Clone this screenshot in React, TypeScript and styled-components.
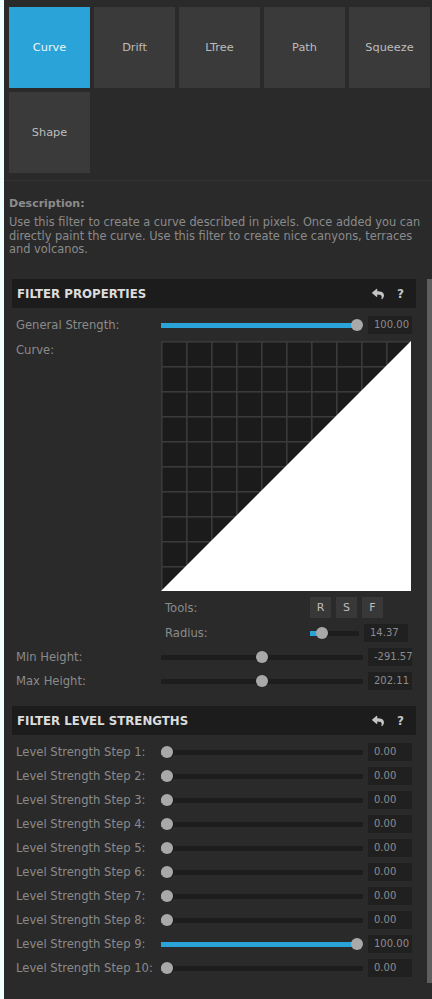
import React from "react";
import styled, { createGlobalStyle } from "styled-components";
import { FaReply } from "react-icons/fa";

const GlobalStyle = createGlobalStyle`
  html, body {
    margin: 0;
    padding: 0;
    background: #effffd;
  }
  * {
    box-sizing: border-box;
  }
`;

const Page = styled.div`
  margin-left: 4px;
  width: 428px;
  height: 999px;
  background: #2a2a2a;
  font-family: "DejaVu Sans", Verdana, sans-serif;
  font-size: 11.6px;
  color: #8a8a8a;
  overflow: hidden;
`;

const FilterGrid = styled.div`
  display: grid;
  grid-template-columns: repeat(5, 81px);
  grid-auto-rows: 81px;
  gap: 4px;
  padding: 7px 0 0 5px;
`;

const FilterButton = styled.div<{ active?: boolean }>`
  display: flex;
  align-items: center;
  justify-content: center;
  background: ${(p) => (p.active ? "#2aa3d8" : "#3a3a3a")};
  color: ${(p) => (p.active ? "#eaf6fc" : "#bdbdbd")};
  font-size: 11.3px;
`;

const Divider = styled.div`
  margin-top: 7px;
  height: 1px;
  background: #333333;
`;

const DescriptionBlock = styled.div`
  height: 98px;
  padding: 16px 4px 0 5px;
`;

const DescTitle = styled.div`
  font-weight: bold;
  font-size: 11px;
  line-height: 13px;
  color: #8c8c8c;
`;

const DescText = styled.p`
  margin: 6px 0 0;
  font-size: 11.4px;
  line-height: 13.5px;
  color: #8a8a8a;
`;

const Main = styled.div`
  display: flex;
  align-items: flex-start;
`;

const Content = styled.div`
  flex: 1;
  padding: 0 11px 0 8px;
`;

const ScrollThumb = styled.div`
  width: 5px;
  height: 704px;
  background: #5e5e5e;
`;

const SectionHeader = styled.div`
  display: flex;
  align-items: center;
  height: 29px;
  padding: 0 12px 0 5px;
  background: #1c1c1c;
  color: #dcdcdc;
  font-weight: bold;
  font-size: 11.8px;
`;

const HeaderTitle = styled.span`
  flex: 1;
`;

const HeaderIcons = styled.div`
  display: flex;
  align-items: center;
  gap: 13px;
  color: #c4c4c4;
`;

const HelpMark = styled.span`
  font-size: 12px;
  font-weight: bold;
`;

const Rows = styled.div<{ top: number; bottom: number }>`
  display: flex;
  flex-direction: column;
  gap: 6px;
  padding: ${(p) => p.top}px 0 ${(p) => p.bottom}px 4px;
`;

const Row = styled.div`
  display: grid;
  grid-template-columns: 140px 202px 44px;
  column-gap: 5px;
  align-items: center;
  height: 18px;
`;

const Label = styled.span`
  white-space: nowrap;
  color: #8a8a8a;
`;

const ValueBox = styled.div`
  height: 18px;
  padding: 0 0 0 6px;
  background: #202020;
  color: #8c8c8c;
  font-size: 10px;
  line-height: 18px;
  white-space: nowrap;
  overflow: hidden;
`;

const Track = styled.div`
  position: relative;
  height: 5px;
  background: #1d1d1d;
`;

const Fill = styled.div`
  position: absolute;
  left: 0;
  top: 0;
  bottom: 0;
  background: #2aa3d8;
`;

const Thumb = styled.div`
  position: absolute;
  top: 50%;
  width: 12px;
  height: 12px;
  margin-top: -6px;
  border-radius: 50%;
  background: #a9a9a9;
`;

const CurveRow = styled.div`
  display: grid;
  grid-template-columns: 145px 250px;
  align-items: start;
`;

const CurveLabel = styled.span`
  padding-top: 3px;
  color: #8a8a8a;
`;

const CurveColumn = styled.div`
  display: flex;
  flex-direction: column;
  gap: 6px;
  padding-top: 1px;
`;

const SubRow = styled.div<{ h: number }>`
  display: grid;
  grid-template-columns: 140px 49px 44px;
  column-gap: 5px;
  align-items: center;
  height: ${(p) => p.h}px;
  padding-left: 4px;
`;

const ToolButtons = styled.div`
  display: flex;
  gap: 5px;
`;

const ToolButton = styled.div`
  flex: 0 0 21px;
  width: 21px;
  height: 21px;
  display: flex;
  align-items: center;
  justify-content: center;
  background: #383838;
  color: #bdbdbd;
  font-size: 11px;
`;

const Slider = ({ value, fill = true }: { value: number; fill?: boolean }) => (
  <Track>
    {fill && <Fill style={{ width: `calc(6px + ${value} * (100% - 12px))` }} />}
    <Thumb style={{ left: `calc(${value} * (100% - 12px))` }} />
  </Track>
);

const CurveGrid = () => (
  <svg width="250" height="250" viewBox="0 0 250 250" style={{ display: "block" }}>
    <rect width="250" height="250" fill="#1b1b1b" />
    {Array.from({ length: 10 }).map((_, i) => (
      <g key={i}>
        <rect x={i * 25} y="0" width="1.6" height="250" fill="#3a3a3a" />
        <rect x="0" y={i * 25} width="250" height="1.6" fill="#3a3a3a" />
      </g>
    ))}
    <polygon points="0,250 250,0 250,250" fill="#ffffff" />
  </svg>
);

const filters = ["Curve", "Drift", "LTree", "Path", "Squeeze", "Shape"];

const levels = [0, 0, 0, 0, 0, 0, 0, 0, 1, 0];

const Header = ({ title }: { title: string }) => (
  <SectionHeader>
    <HeaderTitle>{title}</HeaderTitle>
    <HeaderIcons>
      <FaReply size={12} />
      <HelpMark>?</HelpMark>
    </HeaderIcons>
  </SectionHeader>
);

export default function App() {
  return (
    <>
      <GlobalStyle />
      <Page>
        <FilterGrid>
          {filters.map((f, i) => (
            <FilterButton key={f} active={i === 0}>
              {f}
            </FilterButton>
          ))}
        </FilterGrid>
        <Divider />
        <DescriptionBlock>
          <DescTitle>Description:</DescTitle>
          <DescText>
            Use this filter to create a curve described in pixels. Once added you can directly
            paint the curve. Use this filter to create nice canyons, terraces and volcanos.
          </DescText>
        </DescriptionBlock>
        <Main>
          <Content>
            <Header title="FILTER PROPERTIES" />
            <Rows top={8} bottom={16}>
              <Row>
                <Label>General Strength:</Label>
                <Slider value={1} />
                <ValueBox>100.00</ValueBox>
              </Row>
              <CurveRow>
                <CurveLabel>Curve:</CurveLabel>
                <CurveColumn>
                  <CurveGrid />
                  <SubRow h={21}>
                    <Label>Tools:</Label>
                    <ToolButtons>
                      <ToolButton>R</ToolButton>
                      <ToolButton>S</ToolButton>
                      <ToolButton>F</ToolButton>
                    </ToolButtons>
                  </SubRow>
                  <SubRow h={18}>
                    <Label>Radius:</Label>
                    <Slider value={0.16} />
                    <ValueBox>14.37</ValueBox>
                  </SubRow>
                </CurveColumn>
              </CurveRow>
              <Row>
                <Label>Min Height:</Label>
                <Slider value={0.5} fill={false} />
                <ValueBox>-291.57</ValueBox>
              </Row>
              <Row>
                <Label>Max Height:</Label>
                <Slider value={0.5} fill={false} />
                <ValueBox>202.11</ValueBox>
              </Row>
            </Rows>
            <Header title="FILTER LEVEL STRENGTHS" />
            <Rows top={8} bottom={6}>
              {levels.map((v, i) => (
                <Row key={i}>
                  <Label>Level Strength Step {i + 1}:</Label>
                  <Slider value={v} />
                  <ValueBox>{v === 1 ? "100.00" : "0.00"}</ValueBox>
                </Row>
              ))}
            </Rows>
          </Content>
          <ScrollThumb />
        </Main>
      </Page>
    </>
  );
}
